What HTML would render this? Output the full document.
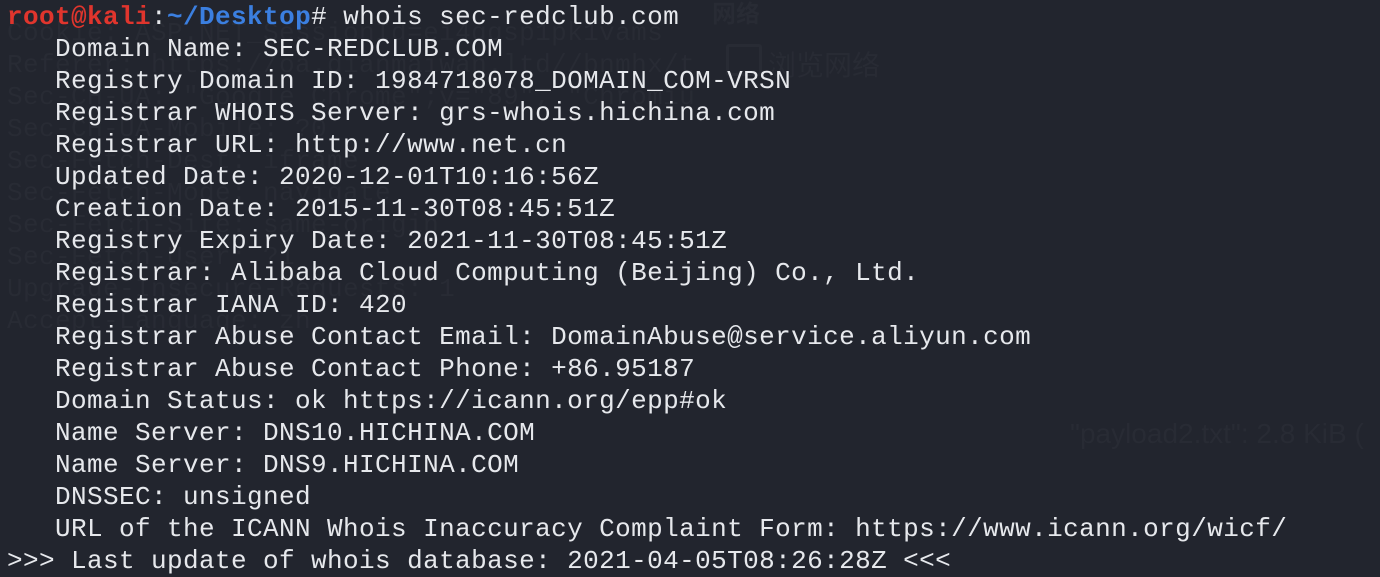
<!DOCTYPE html>
<html><head><meta charset="utf-8"><style>
html,body{margin:0;padding:0;width:1380px;height:556px;overflow:hidden;background:#22252e;}
.t{position:absolute;left:7px;top:1px;font-family:"Liberation Mono",monospace;font-size:26px;letter-spacing:0.4px;line-height:32px;color:#e6e8ec;white-space:pre;}
.g{position:absolute;font-family:"Liberation Mono",monospace;font-size:26px;letter-spacing:0.4px;line-height:32px;color:#282b34;white-space:pre;left:7px;top:17px;}
.r{color:#e0352d;font-weight:bold}.b{color:#3b7fe0;font-weight:bold}
.c{position:absolute;font-family:"Liberation Sans","Noto Sans CJK SC",sans-serif;color:#282b34;}
</style></head><body>
<div class="g">Cookie: ASP.NET_SessionId=ei4qqsp1pk1vams
Referer: https://oa.dianmaiwan.ltd//bnmhx/t
Sec-CH-UA: "Google Chrome";v="89", "Chromiu
Sec-CH-UA-Mobile: ?0
Sec-Fetch-Dest: iframe
Sec-Fetch-Mode: navigate
Sec-Fetch-Site: same-origin
Sec-Fetch-User: ?1
Upgrade-Insecure-Requests: 1
Accept-Language: zh</div>
<div class="c" style="left:712px;top:-6px;font-size:24px;font-weight:bold">网络</div>
<div class="c" style="left:726px;top:44px;width:30px;height:26px;border:3px solid #282b34;border-radius:3px"></div>
<div class="c" style="left:768px;top:44px;font-size:28px">浏览网络</div>
<div class="c" style="left:1070px;top:418px;font-size:28px">"payload2.txt": 2.8 KiB (</div>
<div class="t"><span class="r">root@kali</span>:<span class="b">~/Desktop</span># whois sec-redclub.com
   Domain Name: SEC-REDCLUB.COM
   Registry Domain ID: 1984718078_DOMAIN_COM-VRSN
   Registrar WHOIS Server: grs-whois.hichina.com
   Registrar URL: http://www.net.cn
   Updated Date: 2020-12-01T10:16:56Z
   Creation Date: 2015-11-30T08:45:51Z
   Registry Expiry Date: 2021-11-30T08:45:51Z
   Registrar: Alibaba Cloud Computing (Beijing) Co., Ltd.
   Registrar IANA ID: 420
   Registrar Abuse Contact Email: DomainAbuse@service.aliyun.com
   Registrar Abuse Contact Phone: +86.95187
   Domain Status: ok https://icann.org/epp#ok
   Name Server: DNS10.HICHINA.COM
   Name Server: DNS9.HICHINA.COM
   DNSSEC: unsigned
   URL of the ICANN Whois Inaccuracy Complaint Form: https://www.icann.org/wicf/
&gt;&gt;&gt; Last update of whois database: 2021-04-05T08:26:28Z &lt;&lt;&lt;</div>
</body></html>
